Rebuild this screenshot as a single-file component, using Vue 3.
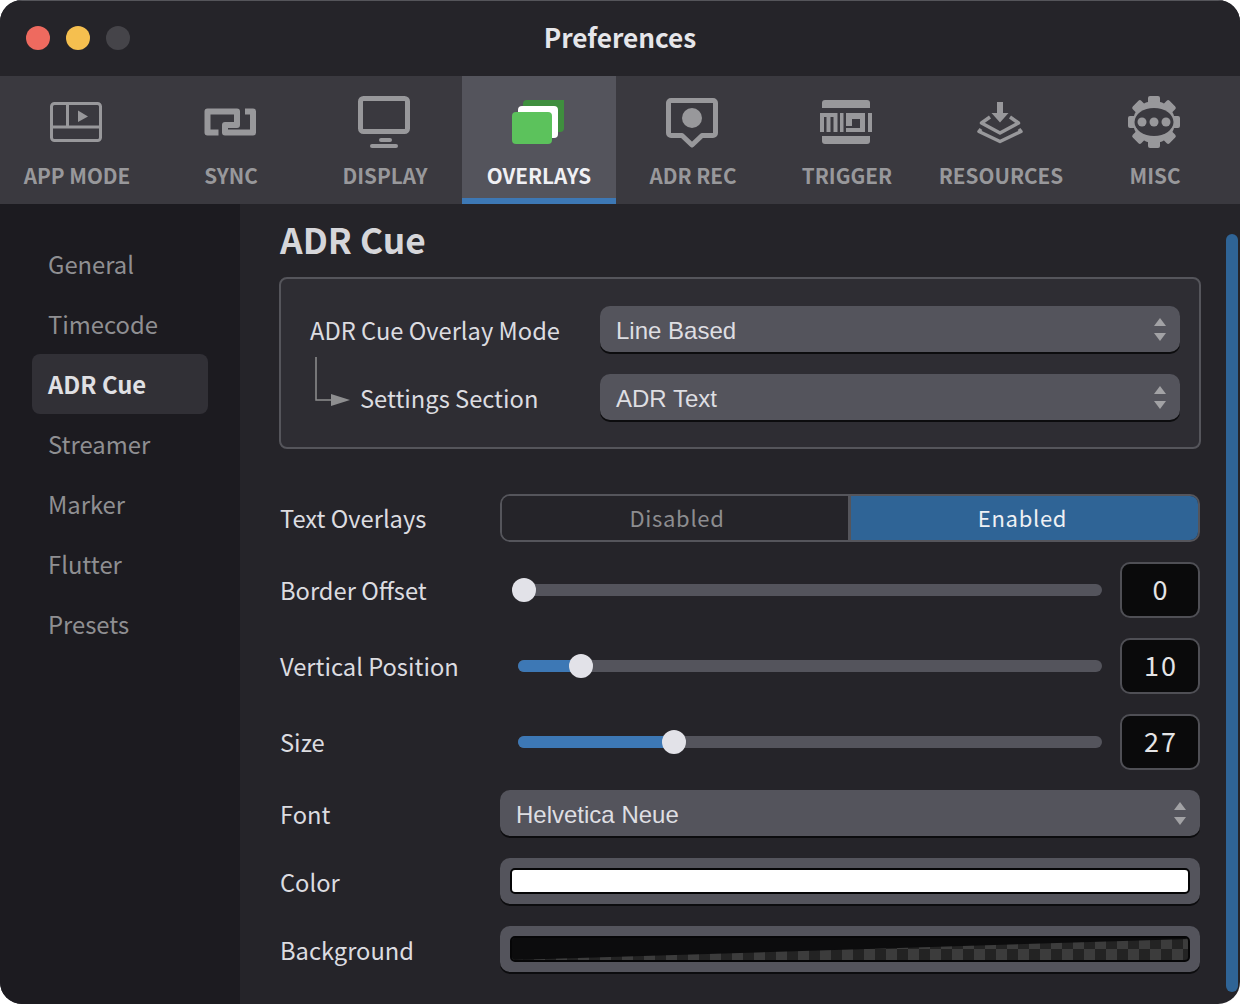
<script setup>
const tabs = [
  { id: 'app', label: 'APP MODE' },
  { id: 'sync', label: 'SYNC' },
  { id: 'display', label: 'DISPLAY' },
  { id: 'overlays', label: 'OVERLAYS', active: true },
  { id: 'adr', label: 'ADR REC' },
  { id: 'trigger', label: 'TRIGGER' },
  { id: 'resources', label: 'RESOURCES' },
  { id: 'misc', label: 'MISC' }
]
const sideItems = ['General', 'Timecode', 'ADR Cue', 'Streamer', 'Marker', 'Flutter', 'Presets']
const sliders = [
  { label: 'Border Offset', value: 0, thumb: 6, fill: 0 },
  { label: 'Vertical Position', value: 10, thumb: 63, fill: 63 },
  { label: 'Size', value: 27, thumb: 156, fill: 156 }
]
const gearAngles = [0, 45, 90, 135, 180, 225, 270, 315]
</script>

<template>
  <div class="window">
    <header class="titlebar">
      <div class="lights">
        <span class="light red"></span>
        <span class="light yellow"></span>
        <span class="light off"></span>
      </div>
      <div class="title">Preferences</div>
    </header>

    <nav class="toolbar">
      <div v-for="t in tabs" :key="t.id" class="tab" :class="{ active: t.active }">
        <svg class="icon" width="154" height="56" viewBox="0 0 154 56">
          <g v-if="t.id === 'app'" fill="none" stroke="#98989b" stroke-width="3">
            <rect x="51.5" y="8.5" width="49" height="37" rx="3" />
            <path d="M51.5 32H100.5M67.5 8.5V32" />
            <path d="M78 15.5L88 21.500L78 27Z" fill="#98989b" stroke="none" />
          </g>
          <g v-if="t.id === 'sync'" fill="none" stroke="#98989b" stroke-width="6">
            <path d="M64.500 37.500H53.500V16.500H83V30H71V37.500H99V16.500H91" stroke-linejoin="round" />
          </g>
          <g v-if="t.id === 'display'" fill="#98989b">
            <rect x="52.500" y="3.500" width="47" height="33" rx="3" fill="none" stroke="#98989b" stroke-width="5" />
            <rect x="71" y="43" width="13" height="4" rx="2" />
            <rect x="62" y="49" width="28" height="4" rx="2" />
          </g>
          <g v-if="t.id === 'overlays'">
            <rect x="61" y="5" width="41" height="32" rx="4" fill="#3f8f3e" />
            <path d="M98 5H102V33L98 37Z" fill="#3f8f3e" />
            <rect x="56" y="11" width="40" height="32" rx="4" fill="#ffffff" />
            <rect x="50" y="17" width="40" height="32" rx="4" fill="#5cc25c" />
          </g>
          <g v-if="t.id === 'adr'">
            <path d="M55 5.500H97A2.500 2.500 0 0 1 99.500 8V38A2.500 2.500 0 0 1 97 40.500H86L76 50L66 40.500H55A2.500 2.500 0 0 1 52.500 38V8A2.500 2.500 0 0 1 55 5.500Z" fill="none" stroke="#98989b" stroke-width="5" stroke-linejoin="round" />
            <circle cx="76" cy="23" r="10" fill="#98989b" />
          </g>
          <g v-if="t.id === 'trigger'" fill="#98989b">
            <path d="M52 13V8A3 3 0 0 1 55 5H97A3 3 0 0 1 100 8V13Z" />
            <path d="M52 41V46A3 3 0 0 0 55 49H97A3 3 0 0 0 100 46V41Z" />
            <path d="M50 18H67.500V37H63.500V22H60.500V37H56.500V22H54V37H50Z" />
            <rect x="70" y="18" width="3.500" height="19" />
            <path d="M76 18H95V37H76V33H90V24H82V31H76Z" />
            <rect x="98" y="18" width="4" height="19" />
          </g>
          <g v-if="t.id === 'resources'" transform="translate(-1 0)">
            <path d="M74 7H80V18H85.500L77 27.500L68.500 18H74Z" fill="#98989b" />
            <path d="M67 22L58.500 28L77 38L95.500 28L87 22" fill="none" stroke="#98989b" stroke-width="3.500" stroke-linejoin="round" />
            <path d="M58 34L56 36.500L77 46.500L98 36.500L96 34" fill="none" stroke="#98989b" stroke-width="3.500" stroke-linejoin="round" />
          </g>
          <g v-if="t.id === 'misc'" transform="translate(-1 1)">
            <rect v-for="a in gearAngles" :key="a" x="71" y="0" width="12" height="12" rx="2" fill="#98989b" :transform="`rotate(${a} 77 26)`" />
            <circle cx="77" cy="26" r="21" fill="#98989b" />
            <ellipse cx="77" cy="26" rx="19.500" ry="14" fill="#3a393f" />
            <circle cx="65" cy="26" r="4.500" fill="#98989b" />
            <circle cx="77" cy="26" r="4.500" fill="#98989b" />
            <circle cx="89" cy="26" r="4.500" fill="#98989b" />
          </g>
        </svg>
        <span class="tab-label">{{ t.label }}</span>
      </div>
    </nav>

    <div class="body">
      <aside class="sidebar">
        <div v-for="s in sideItems" :key="s" class="side-item" :class="{ active: s === 'ADR Cue' }">{{ s }}</div>
      </aside>

      <main class="content">
        <h1 class="heading">ADR Cue</h1>

        <section class="panel">
          <div class="panel-row">
            <label class="panel-label">ADR Cue Overlay Mode</label>
            <div class="select panel-select">
              <span>Line Based</span>
              <span class="stepper"><i class="up"></i><i class="down"></i></span>
            </div>
          </div>
          <div class="panel-row">
            <label class="panel-label sub">
              <svg class="branch" width="40" height="50" viewBox="0 0 40 50">
                <path d="M1 0V43H18" fill="none" stroke="#8e8e90" stroke-width="1.500" />
                <path d="M16 37L35 43L16 49Z" fill="#8e8e90" />
              </svg>
              Settings Section
            </label>
            <div class="select panel-select">
              <span>ADR Text</span>
              <span class="stepper"><i class="up"></i><i class="down"></i></span>
            </div>
          </div>
        </section>

        <div class="row toggle-row">
          <label>Text Overlays</label>
          <div class="segment">
            <div class="seg off">Disabled</div>
            <div class="seg on">Enabled</div>
          </div>
        </div>

        <div v-for="s in sliders" :key="s.label" class="row slider-row">
          <label>{{ s.label }}</label>
          <div class="slider">
            <div class="track">
              <div class="fill" :style="{ width: s.fill + 'px' }"></div>
              <div class="thumb" :style="{ left: s.thumb + 'px' }"></div>
            </div>
          </div>
          <div class="num"><span>{{ s.value }}</span></div>
        </div>

        <div class="row font-row">
          <label>Font</label>
          <div class="select grow">
            <span>Helvetica Neue</span>
            <span class="stepper"><i class="up"></i><i class="down"></i></span>
          </div>
        </div>

        <div class="row well-row">
          <label>Color</label>
          <div class="well"><div class="swatch white"></div></div>
        </div>

        <div class="row well-row">
          <label>Background</label>
          <div class="well"><div class="swatch checker"></div></div>
        </div>
      </main>

      <div class="scrollbar"></div>
    </div>
  </div>
</template>

<style>
html, body {
  margin: 0;
  background: #fff;
}
</style>

<style scoped>
.window {
  width: 1240px;
  height: 1004px;
  border-radius: 22px;
  overflow: hidden;
  display: flex;
  flex-direction: column;
  background: #252429;
  font-family: "Noto Sans CJK SC", "Noto Sans", sans-serif;
  color: #dcdce0;
  position: relative;
}

.titlebar {
  height: 76px;
  flex: none;
  display: flex;
  align-items: center;
  justify-content: center;
  position: relative;
  background: #252429;
  border-top: 1px solid #55555a;
  box-sizing: border-box;
  padding-bottom: 4px;
}
.lights {
  position: absolute;
  left: 26px;
  top: 25px;
  display: flex;
  gap: 16px;
}
.light {
  width: 24px;
  height: 24px;
  border-radius: 50%;
}
.red { background: #ee6a5f; }
.yellow { background: #f5bf4f; }
.off { background: #454449; }
.title {
  font-size: 26.2px;
  font-weight: 700;
  color: #e6e6ea;
}

.toolbar {
  height: 128px;
  flex: none;
  display: flex;
  background: #3a393f;
}
.tab {
  width: 154px;
  display: flex;
  flex-direction: column;
  align-items: center;
  box-sizing: border-box;
  padding-top: 18px;
  color: #98989b;
}
.tab.active {
  background: #54545c;
  color: #f0f0f4;
  border-bottom: 6px solid #3d78b5;
}
.icon { display: block; margin-top: 1px; flex: none; }
.tab-label {
  margin-top: 8px;
  font-size: 20.7px;
  line-height: 32px;
  font-weight: 700;
  white-space: nowrap;
}

.body {
  flex: 1;
  display: flex;
  min-height: 0;
  position: relative;
}
.sidebar {
  width: 240px;
  flex: none;
  background: #1c1b20;
  box-sizing: border-box;
  padding: 30px 32px 0;
}
.side-item {
  height: 60px;
  width: 176px;
  box-sizing: border-box;
  padding: 0 0 2px 16px;
  display: flex;
  align-items: center;
  font-size: 23.8px;
  color: #8f8f92;
}
.side-item.active {
  background: #313036;
  border-radius: 8px;
  color: #e0e0e4;
  font-weight: 700;
}

.content {
  width: 920px;
  margin-left: 40px;
  flex: none;
}
.heading {
  margin: 0;
  height: 73px;
  font-size: 35.3px;
  line-height: 69px;
  font-weight: 700;
  color: #d6d6da;
}
.panel {
  width: 922px;
  height: 172px;
  box-sizing: border-box;
  margin-left: -1px;
  border: 2px solid #55555b;
  border-radius: 8px;
  background: #2e2d33;
  padding: 27px 19px 0 29px;
  display: flex;
  flex-direction: column;
  gap: 22px;
}
.panel-row {
  display: flex;
  align-items: center;
  justify-content: space-between;
  height: 46px;
}
.panel-label {
  font-size: 23.7px;
  position: relative;
  top: 1px;
  color: #dcdce0;
}
.panel-label.sub { margin-left: 50px; }
.branch {
  position: absolute;
  left: -45px;
  top: -24px;
}

.select {
  height: 46px;
  box-sizing: border-box;
  display: flex;
  align-items: center;
  justify-content: space-between;
  padding: 4px 14px 0 16px;
  background: #54545c;
  border-radius: 10px;
  box-shadow: 0 2px 0 #0c0c0e;
  font-family: "Liberation Sans", Arial, sans-serif;
  font-size: 24px;
  color: #dedee2;
}
.panel-select { width: 580px; }
.grow { width: 700px; }
.stepper {
  display: flex;
  flex-direction: column;
  gap: 7px;
  margin-top: -4px;
}
.stepper i {
  display: block;
  width: 0;
  height: 0;
  border-left: 6.5px solid transparent;
  border-right: 6.5px solid transparent;
}
.stepper .up { border-bottom: 8px solid #a2a2a5; }
.stepper .down { border-top: 8px solid #a2a2a5; }

.row {
  display: flex;
  align-items: center;
  font-size: 23.7px;
  color: #dcdce0;
}
.row label { width: 220px; flex: none; }
.toggle-row { margin-top: 45px; height: 48px; }
.segment {
  width: 700px;
  height: 48px;
  display: flex;
  box-sizing: border-box;
  border: 2px solid #55555b;
  border-radius: 10px;
  overflow: hidden;
  font-size: 22px;
  letter-spacing: 0.7px;
}
.seg {
  display: flex;
  align-items: center;
  justify-content: center;
  padding-bottom: 2px;
}
.seg.off {
  width: 349px;
  box-sizing: border-box;
  border-right: 3px solid #55555b;
  padding-left: 4px;
  color: #8d8d90;
  background: #252429;
}
.seg.on {
  flex: 1;
  padding-right: 4px;
  background: #2f6496;
  color: #eef0f4;
}

.slider-row { height: 56px; margin-top: 20px; }
.slider-row label { width: 238px; }
.slider { width: 584px; flex: none; }
.track {
  height: 12px;
  border-radius: 6px;
  background: #54545c;
  position: relative;
}
.fill {
  position: absolute;
  left: 0;
  top: 0;
  bottom: 0;
  border-radius: 6px 0 0 6px;
  background: #3d78b5;
}
.thumb {
  position: absolute;
  top: -6px;
  width: 24px;
  height: 24px;
  margin-left: -12px;
  border-radius: 50%;
  background: #e2e2e8;
}
.num {
  margin-left: 18px;
  width: 80px;
  height: 56px;
  box-sizing: border-box;
  border: 2px solid #4f4f55;
  border-radius: 10px;
  background: #0a0a0b;
  display: flex;
  align-items: center;
  justify-content: center;
  padding: 0 0 4px 2px;
  font-size: 27px;
  letter-spacing: 2px;
  color: #e4e4e6;
}

.font-row { height: 46px; margin-top: 20px; }
.well-row { height: 46px; margin-top: 22px; }
.font-row label, .well-row label { padding-top: 2px; }
.well {
  width: 700px;
  height: 46px;
  box-sizing: border-box;
  padding: 10px;
  background: #54545c;
  border-radius: 10px;
  box-shadow: 0 2px 0 #0c0c0e;
}
.swatch {
  height: 26px;
  border-radius: 5px;
  box-sizing: border-box;
  border: 2px solid #060607;
  position: relative;
  overflow: hidden;
}
.white { background: #fff; }
.checker {
  background: repeating-conic-gradient(#3c3c3c 0 25%, #232323 0 50%) 0 0 / 22px 22px;
}
.checker::after {
  content: "";
  position: absolute;
  inset: 0;
  background: #0c0c0d;
  clip-path: polygon(0 0, 100% 0, 100% 4%, 0 100%);
}

.scrollbar {
  position: absolute;
  left: 1226px;
  top: 30px;
  width: 12px;
  height: 758px;
  border-radius: 6px;
  background: #2f6496;
}
</style>
